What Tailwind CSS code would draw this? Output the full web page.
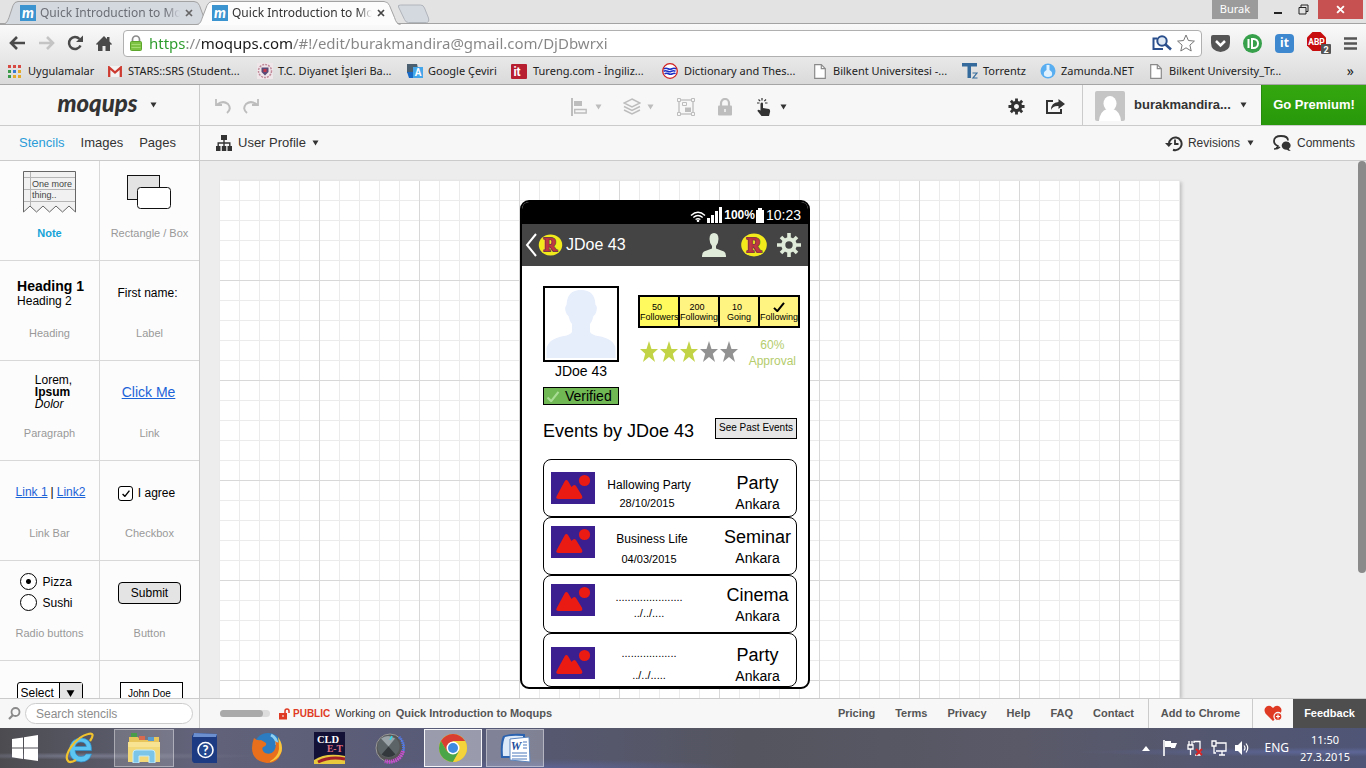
<!DOCTYPE html>
<html lang="en">
<head>
<meta charset="utf-8">
<title>Quick Introduction to Moqups</title>
<script src="https://cdn.jsdelivr.net/npm/@tailwindcss/browser@4"></script>
</head>
<body class="h-screen flex flex-col overflow-hidden bg-[#ededed] font-['Liberation_Sans',Arial,sans-serif] text-[13px] text-[#333]">

<!-- shared drawings -->
<svg class="hidden">
  <symbol id="caret" viewBox="0 0 8 7"><path d="M0.5 0.5h7L4 6.500z" fill="currentColor"/></symbol>
  <symbol id="pic" viewBox="0 0 44 32"><rect width="44" height="32" fill="#3b1e8f"/><circle cx="33.500" cy="8.500" r="5.600" fill="#e91b13"/><path d="M6 23.500 13.500 9.500q1.800-2.800 3.800 0l3.200 5.500q3.200-3.800 5.200 0l5.300 8.800q1.300 3.200-2 3.200H8q-4.200 0-2-3.500z" fill="#e91b13"/></symbol>
  <symbol id="rlogo" viewBox="0 0 26 24"><ellipse cx="13" cy="12" rx="12.800" ry="11.500" fill="#f3ea1c"/><text x="13" y="19" text-anchor="middle" font-family="Liberation Serif" font-weight="700" font-size="20" fill="#a3242e" stroke="#5c4048" stroke-width="2">R</text><text x="13" y="19" text-anchor="middle" font-family="Liberation Serif" font-weight="700" font-size="20" fill="#c03a44" stroke="#b8323c" stroke-width=".8">R</text></symbol>
  <symbol id="star" viewBox="0 0 18 21"><path d="M9 0l2.500 8H18l-5.200 4.700L15 21l-6-5-6 5 2.200-8.300L0 8h6.500z" fill="currentColor"/></symbol>
  <symbol id="doc" viewBox="0 0 12 15"><path d="M.7.7h6.600l4 4v9.600H.7z" fill="#fff" stroke="#8a8a8a" stroke-width="1.200"/><path d="M7.300.7v4h4" fill="none" stroke="#8a8a8a" stroke-width="1.200"/></symbol>
  <symbol id="fav" viewBox="0 0 16 16"><rect width="16" height="16" fill="#3b93cf"/><text x="8" y="12.500" text-anchor="middle" font-family="Lato" font-style="italic" font-weight="900" font-size="15" fill="#fff">m</text></symbol>
  <symbol id="x" viewBox="0 0 8 8"><path d="M1 1l6 6M7 1l-6 6" stroke="currentColor" stroke-width="1.700"/></symbol>
  <symbol id="tick" viewBox="0 0 14 12"><path d="M1 7l4 4 8-10" fill="none" stroke="currentColor" stroke-width="2.400"/></symbol>
</svg>

<!-- tab strip -->
<header class="relative h-6 shrink-0 flex bg-[#e3e3e3] border-b border-[#a3a3a3] font-['Noto_Sans','Open_Sans',sans-serif] text-xs">
  <svg class="absolute left-0 top-0" width="440" height="25" viewBox="0 0 440 25">
    <path d="M0 24.500c6 0 7-2 9-7l4-12Q14.500 1.500 18 1.500H194q4 0 5.500 4l7 19z" fill="#d4d8df" stroke="#a3a3a3"/>
    <path d="M398.500 7q-1-2 2-2h20q3 0 4 3l4 10q1 4.500-2 4.500h-18q-3 0-4-3z" fill="#d4d8df" stroke="#b0b4bb"/>
    <path d="M196 25c4 0 5-3 6-6l5-14q1.500-4 5-4H384q4 0 5.500 4l5 13q2 7 6 7z" fill="#fcfcfc"/>
    <path d="M196 24.500c4 0 5-3 6-6l5-13q1.500-4 5-4H384q4 0 5.500 4l5 12q2 7 6 7" fill="none" stroke="#a3a3a3"/>
  </svg>
  <nav class="relative flex items-center pl-5 pt-0.5">
    <a href="#" class="flex items-center w-48 text-[#6b6e75]"><svg class="w-4 h-4 shrink-0"><use href="#fav"/></svg><span class="ml-1 w-[140px] whitespace-nowrap text-xs mask-r-from-90%">Quick Introduction to Mo</span><svg class="ml-[5px] w-2 h-2 text-[#666]"><use href="#x"/></svg></a>
    <a href="#" class="flex items-center w-48 text-[#333]"><svg class="w-4 h-4 shrink-0"><use href="#fav"/></svg><span class="ml-1 w-[140px] whitespace-nowrap text-xs mask-r-from-90%">Quick Introduction to Mo</span><svg class="ml-[5px] w-2 h-2 text-[#444]"><use href="#x"/></svg></a>
  </nav>
  <div class="ml-auto mr-[3px] flex h-[19px]">
    <button class="w-[46px] bg-[#9b9b9b] text-white text-[11px] leading-none pb-0.5">Burak</button>
    <button aria-label="Minimize" class="w-10 flex justify-center items-center"><svg width="8" height="10"><path d="M0 8h8" stroke="#222" stroke-width="2"/></svg></button>
    <button aria-label="Restore" class="w-5 flex items-center"><svg width="11" height="11" fill="none" stroke="#222"><path d="M1 3.500h7v6.500H1zM3 3V1h7v6.500H8"/></svg></button>
    <button aria-label="Close" class="w-[45px] bg-[#c75050] text-white flex justify-center items-center"><svg class="w-[9px] h-[9px]"><use href="#x"/></svg></button>
  </div>
</header>

<!-- address bar and bookmarks -->
<div class="shrink-0 bg-linear-to-b from-[#fafafa] to-[#dadada] border-b border-[#a5a5a5] font-['Noto_Sans','Open_Sans',sans-serif]">
  <div class="flex items-center h-[34px] pt-1">
    <div class="flex items-center gap-3 pl-[9px] w-[123px] text-[#4a4a4a]">
      <button aria-label="Back"><svg width="17" height="14" fill="none" stroke="currentColor" stroke-width="2.600"><path d="M8 1L2 7l6 6M2 7h14"/></svg></button>
      <button aria-label="Forward" class="text-[#c4c4c4]"><svg width="17" height="14" fill="none" stroke="currentColor" stroke-width="2.600"><path d="M9 1l6 6-6 6M15 7H1"/></svg></button>
      <button aria-label="Reload"><svg width="17" height="16" viewBox="0 0 17 16"><path d="M13.500 10.500A6 6 0 1 1 12.500 4" fill="none" stroke="currentColor" stroke-width="2.500"/><path d="M16 .5V7H9z" fill="currentColor"/></svg></button>
      <button aria-label="Home"><svg width="16" height="15" fill="currentColor"><path d="M8 0l3 3V1h2.500v4.500L16 8l-1 1-1-.8V15H9.500v-5h-3v5H2V8.200L1 9 0 8z"/></svg></button>
    </div>
    <div class="flex-1 flex items-center h-[27px] bg-white border border-[#b0b0b0] rounded-sm px-1.5">
      <svg class="w-3 h-4 mr-[7px] shrink-0" viewBox="0 0 12 16"><path d="M2.500 8V4.500a3.500 3.500 0 0 1 7 0V8" fill="none" stroke="#8b8b8b" stroke-width="1.700"/><rect x=".5" y="6.500" width="11" height="9" rx="1" fill="#7dc243" stroke="#5da62c"/><path d="M1.500 9.500h9M1.500 12.500h9" stroke="#a5dc72"/></svg>
      <input aria-label="Address" value="https://moqups.com/#!/edit/burakmandira@gmail.com/DjDbwrxi" class="flex-1 outline-none text-[15px] leading-6 text-transparent bg-clip-text bg-[linear-gradient(to_right,#2a9a2a_0_38px,#888_38px_53px,#1a1a1a_53px_144px,#858585_144px)]">
      <svg width="20" height="16" fill="none" stroke="#2b4f8c"><path d="M5 3.500H1.500V14H11" stroke-width="2"/><circle cx="10" cy="6" r="4.700" stroke-width="2" fill="#dfe9f5"/><path d="M13 9l6 5.500" stroke-width="2.600"/></svg>
      <svg class="ml-[5px]" width="18" height="18"><path d="M9 1l2.400 5.500 6 .6-4.500 4L14.200 17 9 13.800 3.800 17l1.300-5.900-4.500-4 6-.6z" fill="#fff" stroke="#777"/></svg>
    </div>
    <div class="flex items-center gap-[13px] px-[9px]">
      <button aria-label="Pocket"><svg width="19" height="17"><path d="M0 2Q0 0 2 0h15q2 0 2 2v6q0 8-9.500 9Q0 16 0 8z" fill="#555"/><path d="M5 6l4.500 4.500L14 6" fill="none" stroke="#fff" stroke-width="2.500"/></svg></button>
      <button aria-label="Pushbullet"><svg width="19" height="19"><circle cx="9.500" cy="9.500" r="9.500" fill="#36a04b"/><path d="M5.500 5v9M9 5v9h1.500a4.500 4.500 0 0 0 0-9z" fill="none" stroke="#fff" stroke-width="2"/></svg></button>
      <button class="w-[19px] h-[19px] rounded-sm bg-[#3d88cf] text-white font-bold text-xs leading-none">it</button>
      <button aria-label="Adblock Plus"><svg width="24" height="24" viewBox="0 0 24 24"><path d="M5.500 1h8L19 6.500v8L13.500 20h-8L0 14.500v-8z" fill="#c70d0d"/><text x="9.500" y="13.500" text-anchor="middle" font-family="Roboto" font-weight="700" font-size="8.500" fill="#fff">ABP</text><rect x="14" y="13" width="10" height="10" rx="1" fill="#555"/><text x="19" y="21.500" text-anchor="middle" font-family="Roboto" font-weight="700" font-size="9" fill="#fff">2</text></svg></button>
      <button aria-label="Menu"><svg width="13" height="13" stroke="#555" stroke-width="2.600"><path d="M0 1.500h13M0 6.500h13M0 11.500h13"/></svg></button>
    </div>
  </div>
  <nav class="flex items-center h-[26px] pl-2 pr-3 text-[11px] text-[#222] whitespace-nowrap">
    <a href="#" class="flex items-center gap-[7px] w-[100px]"><svg width="13" height="13" viewBox="0 0 13 13"><path d="M0 0h3v3H0zM5 0h3v3H5zM10 0h3v3h-3z" fill="#d64a43"/><path d="M0 5h3v3H0z" fill="#3c9b4b"/><path d="M5 5h3v3H5z" fill="#3979d6"/><path d="M10 5h3v3h-3zM5 10h3v3H5zM10 10h3v3h-3z" fill="#e3a92b"/><path d="M0 10h3v3H0z" fill="#3c9b4b"/></svg>Uygulamalar</a>
    <a href="#" class="flex items-center gap-[6px] w-[149px]"><svg width="14" height="11"><path d="M0 0h14v11H0z" fill="#f3f3f3"/><path d="M1.200 11V1.500L7 6.500l5.800-5V11" fill="none" stroke="#cc3a30" stroke-width="2.300"/></svg>STARS::SRS (Student...</a>
    <a href="#" class="flex items-center gap-[5px] w-[150px]"><svg width="16" height="16"><rect width="16" height="16" fill="#efe6ea"/><circle cx="8" cy="8" r="6.500" fill="none" stroke="#c08a9a" stroke-width="1.500" stroke-dasharray="2 1"/><path d="M4.500 4.500h7V9L8 12.500 4.500 9z" fill="#5a4a78"/><path d="M6.500 6h3v3h-3z" fill="#c4374a"/></svg>T.C. Diyanet İşleri Ba...</a>
    <a href="#" class="flex items-center gap-[5px] w-[104px]"><svg width="16" height="16"><path d="M0 1h10l2 9H0z" fill="#4a6070"/><path d="M0 9h9v6H2z" fill="#1769c5"/><rect x="6" y="4" width="10" height="11" fill="#45a7ea"/><text x="11" y="13" text-anchor="middle" font-family="Roboto" font-weight="700" font-size="10" fill="#fff">A</text></svg>Google Çeviri</a>
    <a href="#" class="flex items-center gap-[6px] w-[151px]"><svg width="16" height="15"><rect width="16" height="15" rx="1" fill="#b71f31"/><text x="6" y="12" text-anchor="middle" font-family="Roboto" font-weight="700" font-size="12" fill="#fff">it</text></svg>Tureng.com - İngiliz...</a>
    <a href="#" class="flex items-center gap-[6px] w-[152px]"><svg width="16" height="16"><circle cx="8" cy="8" r="7.300" fill="#fff" stroke="#d01f1f" stroke-width="1.300"/><path d="M2 5.700q2-1 4 0t4 0 4 0M1.500 8.200q2-1 4 0t4 0 4 0M2.500 10.700q2-1 4 0t4 0 3 0" fill="none" stroke="#1b2fc4" stroke-width="1.600"/></svg>Dictionary and Thes...</a>
    <a href="#" class="flex items-center gap-[7px] w-[148px]"><svg class="w-3 h-[15px]"><use href="#doc"/></svg>Bilkent Universitesi -...</a>
    <a href="#" class="flex items-center gap-[5px] w-[78px]"><svg width="16" height="16"><path d="M0 0h15v3.500H9V15H5.500V3.500H0z" fill="#356a9c"/><path d="M10.500 10h4.500l-4 5h4.500" fill="none" stroke="#356a9c" stroke-width="1.200"/></svg>Torrentz</a>
    <a href="#" class="flex items-center gap-[5px] w-[110px]"><svg width="16" height="16"><circle cx="8" cy="8" r="7.500" fill="#58aef0"/><path d="M6.500 2h3v5q4 2 2 6-3.500 2-7 0-2-4 2-6z" fill="#dff0ff"/></svg>Zamunda.NET</a>
    <a href="#" class="flex items-center gap-[7px]"><svg class="w-3 h-[15px]"><use href="#doc"/></svg>Bilkent University_Tr...</a>
    <button class="ml-auto text-sm" aria-label="More bookmarks">»</button>
  </nav>
</div>

<!-- application header -->
<div class="flex shrink-0 h-[41px] bg-[#f7f7f7] border-b border-[#cbcbcb]">
  <button class="w-[200px] shrink-0 border-r border-[#cbcbcb] flex items-center justify-center gap-3 pl-[15px]">
    <span class="font-[Lato] italic font-black text-2xl leading-none pb-1">moqups</span>
    <svg class="w-[7px] h-1.5"><use href="#caret"/></svg>
  </button>
  <div class="flex items-center gap-3 pl-[15px] pt-0.5 w-[370px] text-[#bdbdbd]">
    <button aria-label="Undo"><svg width="16" height="15" fill="none" stroke="currentColor" stroke-width="2"><path d="M2 5.500Q8 1 13 5q4 5-1 9"/><path d="M1 0v6h6" stroke-width="1.800"/></svg></button>
    <button aria-label="Redo"><svg width="16" height="15" fill="none" stroke="currentColor" stroke-width="2"><path d="M14 5.500Q8 1 3 5q-4 5 1 9"/><path d="M15 0v6H9" stroke-width="1.800"/></svg></button>
  </div>
  <div class="flex items-center pt-[3px] pl-px text-[#bdbdbd]">
    <button aria-label="Align" class="flex items-center gap-[7px] w-[52px]"><svg width="17" height="18"><path d="M0 0h2v18H0zM3 3h8v5H3z" fill="currentColor"/><path d="M3.700 11.500h11.500v3.500H3.700z" fill="none" stroke="currentColor" stroke-width="1.400"/></svg><svg class="w-[7px] h-1.5"><use href="#caret"/></svg></button>
    <button aria-label="Arrange" class="flex items-center gap-[6px] w-[54px]"><svg width="18" height="17" fill="none" stroke="currentColor" stroke-width="1.400"><path d="M9 1l8 4-8 4-8-4zM1 8.500l8 4 8-4M1 12l8 4 8-4"/></svg><svg class="w-[7px] h-1.5"><use href="#caret"/></svg></button>
    <button aria-label="Group" class="w-[41px]"><svg width="18" height="18"><rect x="2" y="2" width="14" height="14" fill="none" stroke="currentColor" stroke-width="1.300"/><path d="M5.500 4.500h4v3h-4z" fill="none" stroke="currentColor"/><path d="M8 9.500h6V14H8z" fill="currentColor"/><path d="M.5.5h3v3h-3zM14.500.5h3v3h-3zM.5 14.500h3v3h-3zM14.500 14.500h3v3h-3z" fill="#f7f7f7" stroke="currentColor"/></svg></button>
    <button aria-label="Lock" class="w-[39px]"><svg width="14" height="18"><path d="M3 8V5a4 4 0 0 1 8 0v3" fill="none" stroke="currentColor" stroke-width="2.200"/><rect y="7.500" width="14" height="10" rx="1" fill="currentColor"/><path d="M7 11v3" stroke="#f7f7f7" stroke-width="1.500"/></svg></button>
    <button aria-label="Interact" class="flex items-center gap-[9px] text-[#333]"><svg width="14" height="18"><path d="M4.500 18l-4-5q0-2 3-.5V6q0-1.500 1.300-1.500T6 6v4l6 1q1.500.5 1 3l-1 4z" fill="currentColor"/><path d="M0 5h2.500M8 5h2.500M1.500 1.500l1.700 1.700M9 1.500L7.300 3.200M5 0v2.500" stroke="currentColor" stroke-width="1.200"/></svg><svg class="w-[7px] h-1.5"><use href="#caret"/></svg></button>
  </div>
  <div class="ml-auto flex items-center">
    <button aria-label="Settings" class="w-[38px] pt-0.5"><svg width="17" height="17" viewBox="-9 -9 18 18"><circle r="4.300" fill="none" stroke="#333" stroke-width="3.400"/><path d="M0-8.500V-5M0 8.500V5M-8.500 0H-5M8.500 0H5M-6-6l2.500 2.500M6 6L3.500 3.500M-6 6l2.500-2.500M6-6L3.500-3.500" stroke="#333" stroke-width="3"/></svg></button>
    <button aria-label="Share" class="w-9 pt-0.5"><svg width="19" height="15"><path d="M7 2H1v12h14v-4" fill="none" stroke="#333" stroke-width="2"/><path d="M12.500 0L19 5l-6.500 5V7Q7 6.500 5 11q0-7.500 7.500-8z" fill="#333"/></svg></button>
    <button class="h-10 flex items-center border-l border-[#cbcbcb] pl-3 w-[179px] font-bold text-[13px]">
      <svg class="mr-[9px] mt-0.5 shrink-0" width="30" height="30"><rect width="30" height="30" rx="2" fill="#c5c5c5"/><ellipse cx="15" cy="12.500" rx="6.500" ry="7.500" fill="#fff"/><path d="M4 30q1-10 8-12h6q7 2 8 12z" fill="#fff"/></svg>burakmandira...<svg class="ml-[9px] w-[7px] h-1.5"><use href="#caret"/></svg>
    </button>
    <button class="h-10 w-[105px] bg-linear-to-b from-[#34a80f] to-[#27980a] border-l border-[#258a0d] text-white font-bold text-[13px]">Go Premium!</button>
  </div>
</div>

<div class="flex shrink-0 h-[35px] items-stretch bg-[#f7f7f7] border-b border-[#cbcbcb]">
  <nav class="w-[200px] shrink-0 border-r border-[#cbcbcb] flex items-center pl-[19px] gap-4">
    <a href="#" class="text-[#2b9cd8]">Stencils</a><a href="#">Images</a><a href="#">Pages</a>
  </nav>
  <button class="flex items-center ml-4 gap-1.5"><svg width="16" height="16" fill="#333"><path d="M5 0h6v5H5zM0 11h4.500v5H0zM5.800 11h4.500v5H5.800zM11.500 11H16v5h-4.500z"/><path d="M8 5v6M2.200 11V8h11.600v3" fill="none" stroke="#333" stroke-width="1.400"/></svg>User Profile<svg class="w-[7px] h-1.5"><use href="#caret"/></svg></button>
  <div class="ml-auto flex items-center text-xs pr-[11px]">
    <button class="flex items-center gap-[5px]"><svg width="18" height="17" viewBox="0 0 18 17"><path d="M4 8.500a6.300 6.300 0 1 1 4 6.200" fill="none" stroke="#333" stroke-width="2"/><path d="M0 8h7.500L3.800 12z" fill="#333"/><path d="M10 4.500v4.500h3.500" fill="none" stroke="#333" stroke-width="1.800"/></svg>Revisions<svg class="ml-0.5 w-[7px] h-1.5"><use href="#caret"/></svg></button>
    <button class="flex items-center gap-1.5 ml-[19px]"><svg width="18" height="16"><path d="M3 13Q5 12.500 5 11 1 9.500 1 6q0-5 7-5t7 4.500" fill="none" stroke="#333" stroke-width="1.800"/><path d="M1 14q4 0 6-2" stroke="#333" stroke-width="1.500" fill="none"/><path d="M12.500 6.500a4.500 4 0 0 1 3.500 7q0 1.500 2 2.500-3 0-4-1.300a4.500 4.100 0 1 1-1.500-8.200z" fill="#333"/></svg>Comments</button>
  </div>
</div>

<!-- workspace -->
<div class="flex-1 min-h-0 flex">
  <aside class="w-[200px] shrink-0 overflow-hidden bg-[#fcfcfc] border-r border-[#cbcbcb]">
    <div class="grid grid-cols-[100px_1fr] auto-rows-[100px] text-xs text-black *:border-b *:border-[#d8d8d8] *:flex *:flex-col *:items-center *:odd:border-r">
      <div><div class="h-[62px] flex items-center"><div class="relative w-[53px] h-[42px]"><svg class="absolute inset-0" width="53" height="42" fill="none"><path d="M.5.500h52V41l-6.500-6-6.500 6-6.500-6-6.500 6-6.500-6-6.500 6-6.500-6-6.500 6z" fill="#f1f1f1" stroke="#666"/><path d="M1 6.500h51M1 18.500h51M1 30.500h51M7.500 1v34" stroke="#b5b5b5"/></svg><p class="relative pl-[9px] pt-2 text-[9px] leading-[11px] text-[#444] whitespace-nowrap">One more<br>thing..</p></div></div><span class="h-5 leading-5 text-[11px] font-bold text-[#15a3d8]">Note</span></div>
      <div><div class="h-[62px] flex items-center pt-0.5 pr-0.5"><svg width="46" height="36"><rect x="1.500" y=".5" width="32" height="24" fill="#e3e3e3" stroke="#111"/><rect x="11.500" y="12.500" width="33" height="21" rx="3" fill="#fff" stroke="#111"/></svg></div><span class="h-5 leading-5 text-[11px] text-[#999]">Rectangle / Box</span></div>
      <div><div class="h-[62px] flex flex-col justify-center pt-0.5 pl-0.5"><b class="text-sm leading-[15px]">Heading 1</b><span class="leading-[14px]">Heading 2</span></div><span class="h-5 leading-5 text-[11px] text-[#999]">Heading</span></div>
      <div><div class="h-[62px] flex items-center pt-0.5 pr-1">First name:</div><span class="h-5 leading-5 text-[11px] text-[#999]">Label</span></div>
      <div><div class="h-[62px] flex flex-col justify-center pl-2 leading-3"><span>Lorem,</span><b>Ipsum</b><i>Dolor</i></div><span class="h-5 leading-5 text-[11px] text-[#999]">Paragraph</span></div>
      <div><div class="h-[62px] flex items-center pr-0.5"><a href="#" class="underline text-sm text-[#1d63d8]">Click Me</a></div><span class="h-5 leading-5 text-[11px] text-[#999]">Link</span></div>
      <div><div class="h-[62px] flex items-center gap-[3px] text-xs pl-0.5"><a href="#" class="underline text-[#1d63d8]">Link 1</a>|<a href="#" class="underline text-[#1d63d8]">Link2</a></div><span class="h-5 leading-5 text-[11px] text-[#999]">Link Bar</span></div>
      <div><label class="h-[62px] flex items-center gap-[5px] pt-0.5 pr-1.5"><span class="relative w-[15px] h-[15px]"><input type="checkbox" checked class="block appearance-none w-[15px] h-[15px] rounded-[3px] border border-black bg-white"><svg class="absolute left-1 top-1 w-2 h-[7px]"><use href="#tick"/></svg></span>I agree</label><span class="h-5 leading-5 text-[11px] text-[#999]">Checkbox</span></div>
      <div><div class="h-[62px] flex flex-col justify-center gap-1 pr-1.5"><label class="flex items-center gap-[5px]"><input type="radio" name="food" checked class="appearance-none w-[17px] h-[17px] rounded-full border border-black bg-[radial-gradient(#000_0_2px,#fff_3px)]">Pizza</label><label class="flex items-center gap-[5px]"><input type="radio" name="food" class="appearance-none w-[17px] h-[17px] rounded-full border border-black bg-white">Sushi</label></div><span class="h-5 leading-5 text-[11px] text-[#999]">Radio buttons</span></div>
      <div><div class="h-[62px] flex items-center pt-0.5"><button class="w-[63px] h-[22px] rounded border border-black bg-[#e4e4e4] leading-none">Submit</button></div><span class="h-5 leading-5 text-[11px] text-[#999]">Button</span></div>
      <div><div class="h-[62px] flex items-center pt-0.5"><div class="relative w-[66px] h-[22px]"><select aria-label="Select" class="appearance-none w-full h-full rounded-[3px] border border-black bg-white pl-[3px]"><option>Select</option></select><span class="absolute right-px inset-y-px w-[23px] bg-[#e4e4e4] border-l border-black flex items-center justify-center pointer-events-none"><svg class="w-[9px] h-[9px]"><use href="#caret"/></svg></span></div></div></div>
      <div><div class="h-[62px] flex items-center pt-0.5 pl-1"><input aria-label="Name" value="John Doe" class="w-[63px] h-[22px] border border-black bg-white pl-[7px] text-[10px]"></div></div>
    </div>
  </aside>

  <main class="relative flex-1 min-w-0 overflow-hidden bg-[#ededed] pl-5 pt-5">
    <div class="absolute right-0 top-0 w-2 h-[412px] rounded-full bg-[#8a8a8a]"></div>
    <div class="relative h-full w-[960px] bg-white shadow-[2px_1px_3px_#c4c4c4] bg-[repeating-linear-gradient(to_right,transparent_0_99px,#d8d8d8_99px_100px),repeating-linear-gradient(to_bottom,transparent_0_99px,#d8d8d8_99px_100px),repeating-linear-gradient(to_right,transparent_0_19px,#ebebeb_19px_20px),repeating-linear-gradient(to_bottom,transparent_0_19px,#ebebeb_19px_20px)]">
      <!-- phone mockup placed on the canvas -->
      <section class="absolute left-[300px] top-[19px] w-[290px] rounded-[9px] border-2 border-black bg-white overflow-hidden text-black">
        <div class="flex items-center justify-end h-[22px] bg-black text-white pr-[7px] pt-1">
          <svg class="mt-0.5" width="16" height="11" fill="none" stroke="#fff" stroke-width="1.400"><path d="M1 4.500q7-6.500 14 0M3.300 6.500q4.700-4 9.400 0M5.600 8.500q2.400-1.800 4.800 0"/><circle cx="8" cy="9.800" r=".6"/></svg>
          <svg class="ml-px mr-0.5" width="15" height="16" fill="#fff"><path d="M0 11h3v5H0zM4 8h3v8H4zM8 4h3v12H8zM12 0h3v16h-3z"/></svg>
          <b class="text-xs">100%</b><svg class="ml-px" width="8" height="15"><path d="M2 0h4v2h2v13H0V2h2z" fill="#fff"/></svg><span class="ml-0.5 text-sm">10:23</span>
        </div>
        <div class="flex items-center h-[42px] bg-[#444] text-white pl-[3px] pr-[7px]">
          <button aria-label="Back"><svg width="12" height="24"><path d="M11 1L2 12l9 11" fill="none" stroke="#fff" stroke-width="2"/></svg></button>
          <svg class="ml-px w-[25px] h-[22px]"><use href="#rlogo"/></svg>
          <span class="ml-[3px] text-base">JDoe 43</span>
          <svg class="ml-auto" width="24" height="24" fill="#e0ecd9"><path d="M12 0q4.500 0 4.500 6 0 4-2.500 7v2.500l8 3q2 1 2 5.500H0q0-4.500 2-5.500l8-3V13Q7.500 10 7.500 6 7.500 0 12 0z"/></svg>
          <svg class="ml-[15px] w-[26px] h-6"><use href="#rlogo"/></svg>
          <svg class="ml-[10px]" width="24" height="24" viewBox="-12 -12 24 24"><circle r="5.700" fill="none" stroke="#e0ecd9" stroke-width="4"/><path d="M0-12V-6M0 12V6M-12 0H-6M12 0H6M-8-8l4 4M8 8L4 4M-8 8l4-4M8-8L4-4" stroke="#e0ecd9" stroke-width="3.600"/></svg>
        </div>
        <div class="pl-[21px] pr-[11px] pt-5">
          <div class="flex justify-between -mr-[3px]">
            <div class="w-[76px] flex flex-col items-center">
              <svg class="border-2 border-black" width="76" height="76" viewBox="0 0 72 72"><path d="M36 2q14 0 14.500 15 2 1 1 6-1 4-3 5-1 5-3.500 8v8q2 3 8 4 17 3 17.500 13v9H1.500v-9q1-10 17.500-13 6-1 8-4v-8q-2.500-3-3.500-8-2-1-3-5t1-6Q22 2 36 2z" fill="#e6edfb"/></svg>
              <span class="text-sm leading-4 mt-px">JDoe 43</span>
              <button class="mt-2 w-full h-[18px] flex items-center gap-[5px] border border-black bg-[#6fb854] text-sm leading-4 pl-0.5"><svg class="w-[14px] h-[11px] text-[#a9dc95]"><use href="#tick"/></svg>Verified</button>
            </div>
            <div class="w-[162px] pt-[9px]">
              <table class="w-full border-collapse table-fixed text-center text-[9px] leading-[10px]"><tbody><tr class="h-[31px] *:border-2 *:border-black *:p-0 *:bg-[#fff382]">
                <td class="bg-[#fffb5e]!"><span class="pr-1">50</span><br>Followers</td><td><span class="pr-1">200</span><br>Following</td><td><span class="pr-1">10</span><br>Going</td><td><svg class="mx-auto w-3 h-[10px]"><use href="#tick"/></svg>Following</td></tr></tbody></table>
              <div class="flex justify-between mt-2">
                <div class="flex gap-0.5 pt-[5px] pl-0.5 text-[#c2d345]"><svg class="w-[18px] h-[21px]"><use href="#star"/></svg><svg class="w-[18px] h-[21px]"><use href="#star"/></svg><svg class="w-[18px] h-[21px]"><use href="#star"/></svg><svg class="w-[18px] h-[21px] text-[#929292]"><use href="#star"/></svg><svg class="w-[18px] h-[21px] text-[#929292]"><use href="#star"/></svg></div>
                <p class="text-xs leading-4 pt-px text-center text-[#b4cc6c] pr-1">60%<br>Approval</p>
              </div>
            </div>
          </div>
          <div class="flex items-center justify-between mt-3">
            <h2 class="text-lg leading-7">Events by JDoe 43</h2>
            <button class="w-[82px] h-[21px] mb-1.5 border border-black bg-[#e6e6e6] text-[10px] leading-none whitespace-nowrap">See Past Events</button>
          </div>
          <ul class="mt-3.5 *:flex *:h-[58px] *:border *:border-black *:rounded-lg *:pl-[7px] *:text-center">
            <li><svg class="w-11 h-8 mt-3"><use href="#pic"/></svg><div class="w-[108px] pt-[17px]"><p class="text-xs leading-4">Hallowing Party</p><p class="text-[11px] leading-5 pr-1">28/10/2015</p></div><div class="flex-1 pl-4 pt-3"><p class="text-lg leading-[22px]">Party</p><p class="text-sm leading-5">Ankara</p></div></li>
            <li><svg class="w-11 h-8 mt-2"><use href="#pic"/></svg><div class="w-[114px] pt-[13px]"><p class="text-xs leading-4">Business Life</p><p class="text-[11px] leading-6 pr-1.5">04/03/2015</p></div><div class="flex-1 pl-2.5 pt-2"><p class="text-lg leading-[22px]">Seminar</p><p class="text-sm leading-5">Ankara</p></div></li>
            <li><svg class="w-11 h-8 mt-2"><use href="#pic"/></svg><div class="w-[108px] pt-[13px]"><p class="text-[11px] leading-4">......................</p><p class="text-[11px] leading-4">../../....</p></div><div class="flex-1 pl-4 pt-2"><p class="text-lg leading-[22px]">Cinema</p><p class="text-sm leading-5">Ankara</p></div></li>
            <li class="h-[54px]!"><svg class="w-11 h-8 mt-[13px]"><use href="#pic"/></svg><div class="w-[108px] pt-[11px]"><p class="text-[11px] leading-4">..................</p><p class="text-[11px] leading-7">../../.....</p></div><div class="flex-1 pl-4 pt-2.5"><p class="text-lg leading-[22px]">Party</p><p class="text-sm leading-5">Ankara</p></div></li>
          </ul>
        </div>
      </section>
    </div>
  </main>
</div>

<!-- status bar -->
<footer class="flex shrink-0 h-[30px] bg-[#f7f7f7] border-t border-[#cbcbcb] text-[11px] font-bold text-[#555]">
  <label class="w-[200px] shrink-0 border-r border-[#cbcbcb] flex items-center gap-1 pl-2">
    <svg width="13" height="13" fill="none" stroke="#8a8a8a"><circle cx="7.500" cy="5" r="4" stroke-width="1.800"/><path d="M5 8l-4 4" stroke-width="2.200"/></svg>
    <input type="search" placeholder="Search stencils" class="w-[168px] h-[21px] rounded-full border border-[#ccc] bg-white px-[10px] text-xs font-normal placeholder:text-[#8c8c8c]">
  </label>
  <div class="flex items-center pl-5 whitespace-nowrap">
    <span class="w-[50px] h-[7px] rounded-full bg-[#ddd]"><span class="block w-[43px] h-full rounded-full bg-[#aaa]"></span></span>
    <svg class="ml-[9px]" width="11" height="12"><rect y="5" width="8" height="6.500" fill="#df3a24"/><path d="M6 5V3q0-2 2-2t2 2v2" fill="none" stroke="#df3a24" stroke-width="1.500"/><path d="M4 7v2" stroke="#fff"/></svg>
    <span class="ml-[3px] text-[10px] text-[#df3a24]">PUBLIC</span><span class="ml-[5px] font-normal text-[#333]">Working on</span><span class="ml-[5px]">Quick Introduction to Moqups</span>
  </div>
  <nav class="ml-auto flex items-center gap-5 pr-[14px]"><a href="#">Pricing</a><a href="#">Terms</a><a href="#">Privacy</a><a href="#">Help</a><a href="#">FAQ</a><a href="#">Contact</a></nav>
  <a href="#" class="w-[105px] border-x border-[#cbcbcb] flex items-center justify-center">Add to Chrome</a>
  <button aria-label="Love" class="w-10 flex items-center justify-center"><svg width="19" height="17"><path d="M9 16L1.500 8.500Q-1 4 2.500 1.500 6-.5 9 3q3-3.500 6.500-1.500Q19 4 16.500 8.500z" fill="#df3a24"/><circle cx="14" cy="11.500" r="4" fill="#df3a24" stroke="#f7f7f7" stroke-width="1.300"/><path d="M12 11.500h4M14 9.500v4" stroke="#fff" stroke-width="1.200"/></svg></button>
  <button class="w-[73px] bg-[#4e4e4e] text-white">Feedback</button>
</footer>

<!-- taskbar -->
<div class="flex shrink-0 h-10 items-center bg-[radial-gradient(ellipse_at_7%_70%,#77788b_0,transparent_9%),radial-gradient(ellipse_at_40%_100%,#5c6392_0,transparent_16%),radial-gradient(ellipse_at_98%_60%,#5d6697_0,transparent_14%),linear-gradient(to_right,#4c4c50,#62637a_14%,#565976_35%,#55555f_55%,#595968_75%,#4f5576)] text-white font-['Noto_Sans','Open_Sans',sans-serif]">
  <button aria-label="Start" class="w-[50px] flex justify-center"><svg width="26" height="26" fill="#fff"><path d="M0 4l11-1.600V12.400H0zM12 2.200L26 0v12.400H12zM0 13.500h11V24L0 22.300zM12 13.500h14V26l-14-2z"/></svg></button>
  <button aria-label="Internet Explorer" class="w-[62px] flex justify-center"><svg width="32" height="32"><path d="M26.500 18.500H10q.5 6 6 6 4 0 5-2.500h5.500Q24 30 16 30 4.500 29 4.500 18 5 6.500 16 6q11 .5 10.500 12.500zM10.300 14.500h11q-.5-4.500-5.500-4.500-4.500 0-5.500 4.500z" fill="#5cc5f2" stroke="#2d8fcd" stroke-width=".7"/><path d="M25 9Q31 0 23 2 14 4 6 15-1 26 3.500 29.500 6 31 11 28" fill="none" stroke="#f0c22d" stroke-width="2.300"/></svg></button>
  <button aria-label="File Explorer" class="w-[60px] h-[38px] ml-0.5 flex justify-center items-center bg-white/15 border border-white/40"><svg width="32" height="30"><path d="M1 4h9l2 3h13V4h6v25H1z" fill="#e8c65b"/><path d="M3 0h6v4H3z" fill="#4a9b4a"/><path d="M11 3h6v4h-6z" fill="#d86a50"/><path d="M20 4h6v4h-6z" fill="#5a9bd0"/><path d="M0 9h32v20H0z" fill="#f7e391"/><path d="M0 14h32v15H0z" fill="#f3d977"/><path d="M5 30V20q0-3 3-3h16q3 0 3 3v10h-6v-7H11v7z" fill="#7cc4e8" stroke="#c7ecfa"/></svg></button>
  <button aria-label="Help" class="w-[62px] flex justify-center"><svg width="26" height="32"><path d="M2 1l23 1v29H2Q0 30 0 28V4z" fill="#1c3b83"/><path d="M2 1l23 1-1 3H1z" fill="#6c8fd0"/><circle cx="13.500" cy="18" r="7.500" fill="#24488f" stroke="#fff" stroke-width="1.600"/><text x="13.500" y="22.500" text-anchor="middle" font-family="Lato" font-weight="900" font-size="13" fill="#fff">?</text></svg></button>
  <button aria-label="Firefox" class="w-[62px] flex justify-center"><svg width="32" height="32"><circle cx="17" cy="15" r="14" fill="#2b7cc0"/><path d="M20 3q6 3 6 10" stroke="#8fd0f0" stroke-width="3" fill="none"/><path d="M3 6q3 3 7 2l5 3q1 3-3 4-2 3 2 6 6 2 9-2 3-5 1-10 5 4 4.500-2Q31 12 31 17 29 31 16 31 1 29 1 16q0-5 2-10z" fill="#e8701c"/><path d="M27 5q6 9 3 16-4 8-12 9 9-5 10-13 0-7-1-12z" fill="#f7c63c"/></svg></button>
  <button aria-label="CLD" class="w-[62px] flex justify-center"><svg width="31" height="32"><rect width="31" height="32" fill="#141136"/><text x="3" y="10.500" font-family="Liberation Serif" font-weight="700" font-size="10.500" fill="#fff">CLD</text><text x="13" y="20" font-family="Liberation Serif" font-weight="700" font-size="9.500" fill="#e07080">E-T</text><path d="M0 28q12-8 31-4v8H0z" fill="#e8c83c"/><path d="M4 30q12-6 27-3" stroke="#a01f28" stroke-width="3" fill="none"/></svg></button>
  <button aria-label="Volume" class="w-[60px] flex justify-center"><svg width="32" height="32"><circle cx="16" cy="16" r="14" fill="#555" stroke="#999"/><path d="M25 5a14 14 0 0 1 4 14" fill="none" stroke="#4b74e8" stroke-width="3" stroke-dasharray="1.500 .7"/><path d="M29 19a14 14 0 0 1-18 10" fill="none" stroke="#c64ad0" stroke-width="4" stroke-dasharray="1.500 .7"/><circle cx="14.500" cy="14.500" r="11" fill="#5d6468"/><path d="M14.500 14.500L7 6.500q7-5 14 0z" fill="#9aa3a7"/><path d="M14.500 14.500l7 8q-7 5-14 0z" fill="#32383b"/><path d="M16 8l2-4" stroke="#2bd6e8" stroke-width="1.500"/></svg></button>
  <button aria-label="Chrome" class="w-[58px] h-[38px] ml-1 flex justify-center items-center bg-white/40 border border-white/90"><svg width="30" height="30" viewBox="-15 -15 30 30"><circle r="14" fill="#e5c72c"/><path d="M-12.100-7A14 14 0 0 1 12.100-7H0L-6 3.500z" fill="#d93c30"/><path d="M-12.100-7A14 14 0 0 0 0 14L6 3.500-6 3.500z" fill="#4aa548"/><path d="M0-7H12.100A14 14 0 0 1 0 14L6 3.500z" fill="#f3d23a"/><circle r="6.500" fill="#fff"/><circle r="5" fill="#3f8be0"/></svg></button>
  <button aria-label="Word" class="w-[58px] h-[38px] ml-1 flex justify-center items-center bg-white/25 border border-white/40"><svg width="31" height="31"><path d="M3 3q6-3 22-2v24H1Q0 9 3 3z" fill="#2a62b0"/><path d="M5 4q6-2 18-1v20H3Q2 10 5 4z" fill="#dbe9f8"/><path d="M10 6l19-2 1 25-20-2z" fill="#fff" stroke="#5b85bf"/><text x="16" y="17" text-anchor="middle" font-family="Liberation Serif" font-weight="700" font-style="italic" font-size="12" fill="#1f4f9c">W</text><path d="M23 9h4M23 12h4M23 15h4M12 20h15M12 23h15M12 26h15" stroke="#4a79bd" stroke-width="1.200"/></svg></button>
  <div class="ml-auto flex items-center text-xs pr-4">
    <button aria-label="Show hidden icons" class="mr-[13px]"><svg width="8" height="5"><path d="M0 5l4-5 4 5z" fill="#fff"/></svg></button>
    <svg class="mr-[9px]" width="15" height="16"><path d="M1 0v16" stroke="#fff" stroke-width="1.600"/><path d="M2 1h6v2h6l-2 5H8V7H2z" fill="#fff"/></svg>
    <svg class="mr-[8px]" width="16" height="16" fill="none" stroke="#fff" stroke-width="1.300"><path d="M1 5h5v4H1zM2 1v4M5 1v4M3.500 9v6M7 3V1.500h6V15H8"/><path d="M9 9l6 6M15 9l-6 6" stroke="#d82424" stroke-width="2"/></svg>
    <svg class="mr-[8px]" width="16" height="16" fill="none" stroke="#fff" stroke-width="1.300"><path d="M5 3h10v8H5M8 15h6M11 11v4M1 1h4v5H1zM3 6v7h2"/></svg>
    <svg class="mr-[15px]" width="15" height="14"><path d="M0 4h3l4-4v14l-4-4H0z" fill="#fff"/><path d="M9 4.500q2 2.500 0 5M11 2.500q3.500 4.500 0 9" fill="none" stroke="#fff" stroke-width="1.200"/></svg>
    <span class="mr-[11px] text-xs">ENG</span>
    <p class="text-[11px] leading-[17px] text-center">11:50<br>27.3.2015</p>
  </div>
</div>
</body>
</html>
